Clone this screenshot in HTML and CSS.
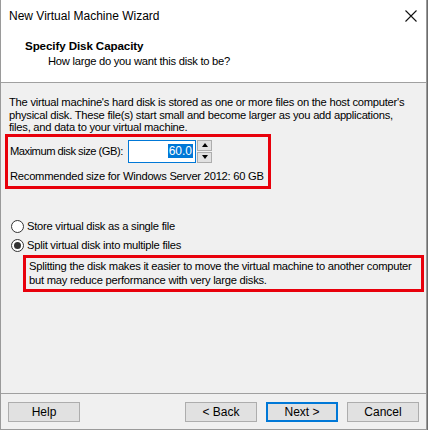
FILE: index.html
```html
<!doctype html>
<html lang="en">
<head>
	<meta charset="UTF-8">
	<title>New Virtual Machine Wizard</title>
	<link rel="stylesheet" href="styles.css">
</head>
<body>
<div class="window">
	<div class="titlebar">
		<span class="caption">New Virtual Machine Wizard</span>
		<svg class="close" width="12" height="12" viewBox="0 0 12 12"><path d="M0.5 0.5L11.5 11.5M11.5 0.5L0.5 11.5" stroke="#111" stroke-width="1.1" fill="none"/></svg>
	</div>
	<div class="header">
		<div class="head-title">Specify Disk Capacity</div>
		<div class="head-sub">How large do you want this disk to be?</div>
	</div>
	<div class="content">
		<p class="intro">The virtual machine's hard disk is stored as one or more files on the host computer's<br>physical disk. These file(s) start small and become larger as you add applications,<br>files, and data to your virtual machine.</p>
		<div class="mark size-box">
			<div class="size-row">
				<span class="size-label">Maximum disk size (GB):</span>
				<div class="field"><span class="sel">60.0</span></div>
				<div class="spin">
					<div class="spin-btn"><span class="tri up"></span></div>
					<div class="spin-btn"><span class="tri down"></span></div>
				</div>
			</div>
			<div class="rec">Recommended size for Windows Server 2012: 60 GB</div>
		</div>
		<div class="radios">
			<div class="radio"><span class="dot"></span>Store virtual disk as a single file</div>
			<div class="radio checked"><span class="dot"></span>Split virtual disk into multiple files</div>
		</div>
		<div class="mark note">Splitting the disk makes it easier to move the virtual machine to another computer<br>but may reduce performance with very large disks.</div>
	</div>
	<div class="footer">
		<div class="btn">Help</div>
		<div class="spacer"></div>
		<div class="btn">&lt; Back</div>
		<div class="btn default">Next &gt;</div>
		<div class="btn">Cancel</div>
	</div>
</div>
</body>
</html>
```

FILE: styles.css
```css
*{
	margin:0;
	padding:0;
	box-sizing:border-box;
}
body{
	background:#6d6d6d;
	font-family:"Liberation Sans",Arial,sans-serif;
	font-size:11.2px;
	letter-spacing:-0.25px;
	color:#000;
	white-space:nowrap;
}
.window{
	width:427px;
	height:430px;
	background:#f0f0f0;
	border:1px solid #9a9a9a;
	border-top:none;
	display:flex;
	flex-direction:column;
}
.titlebar{
	height:31px;
	background:#fff;
	display:flex;
	align-items:center;
	justify-content:space-between;
	padding:0 9px 0 8px;
	font-size:12px;
	letter-spacing:0;
}
.header{
	height:52px;
	background:#fff;
	border-bottom:1px solid #a0a0a0;
	padding-top:8px;
}
.head-title{
	font-weight:bold;
	padding-left:24px;
	line-height:13px;
	font-size:11.6px;
	letter-spacing:-0.1px;
}
.head-sub{
	padding-left:47px;
	line-height:13px;
	margin-top:3px;
}
.content{
	flex:1;
	padding:13px 3px 0 4px;
}
.intro{
	line-height:12.5px;
	padding-left:4px;
}
.mark{
	border:3px solid #e8000b;
}
.size-box{
	width:266px;
	padding:3px 0 3px 2px;
}
.size-row{
	display:flex;
	align-items:center;
	height:23px;
}
.size-label{
	width:118px;
	letter-spacing:-0.5px;
}
.field{
	width:68px;
	height:23px;
	background:#fff;
	border:1px solid #0078d7;
	display:flex;
	align-items:center;
	justify-content:flex-end;
	padding-right:2px;
}
.sel{
	background:#0078d7;
	color:#fff;
	padding:0 1px;
	line-height:14px;
	font-size:12px;
	letter-spacing:0;
}
.spin{
	margin-left:1px;
	display:flex;
	flex-direction:column;
	gap:1px;
}
.spin-btn{
	width:15px;
	height:11px;
	background:#e1e1e1;
	border:1px solid #adadad;
	display:flex;
	align-items:center;
	justify-content:center;
}
.tri{
	width:0;
	height:0;
	border-left:3.5px solid transparent;
	border-right:3.5px solid transparent;
}
.tri.up{
	border-bottom:4px solid #000;
}
.tri.down{
	border-top:4px solid #000;
}
.rec{
	margin-top:7px;
	line-height:13px;
}
.radios{
	margin-top:28px;
}
.radio{
	display:flex;
	align-items:center;
	height:19px;
	padding-left:6px;
}
.dot{
	width:13px;
	height:13px;
	border:1px solid #333;
	border-radius:50%;
	background:#fff;
	margin-right:3px;
	display:flex;
	align-items:center;
	justify-content:center;
}
.radio.checked .dot::after{
	content:"";
	width:7px;
	height:7px;
	border-radius:50%;
	background:#333;
}
.note{
	margin-left:18px;
	width:401px;
	padding:1px 0 2px 3px;
	line-height:14px;
}
.footer{
	height:36px;
	border-top:1px solid #a0a0a0;
	display:flex;
	align-items:flex-start;
	padding:8px 7px 0 7px;
	gap:9px;
}
.spacer{
	flex:1;
}
.btn{
	width:72px;
	height:20px;
	background:#e1e1e1;
	border:1px solid #adadad;
	display:flex;
	align-items:center;
	justify-content:center;
	font-size:12px;
	letter-spacing:0;
}
.btn.default{
	border:2px solid #0078d7;
}
```
